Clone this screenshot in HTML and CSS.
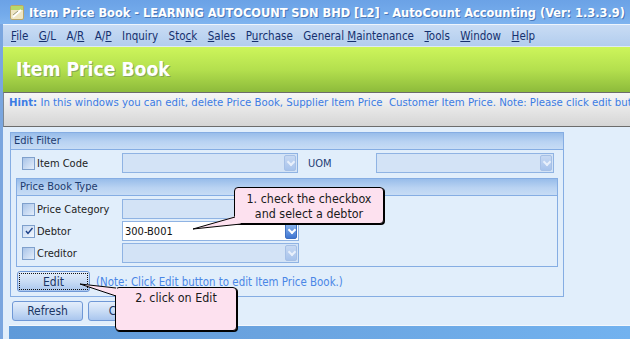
FILE: index.html
```html
<!DOCTYPE html>
<html lang="en">
<head>
  <meta charset="UTF-8" />
  <title>Item Price Book</title>
  <link rel="stylesheet" href="styles.css">
</head>
<body>
  <div class="window">
    <div class="titlebar">
      <svg class="app-icon" width="14" height="15" viewBox="0 0 14 15">
        <rect x="0.5" y="0.5" width="13" height="14" rx="1.5" fill="#efe6c4" stroke="#b9a66a"/>
        <rect x="1" y="1" width="12" height="4" fill="#b8d86a"/>
        <path d="M3 12 L11 5" stroke="#ffffff" stroke-width="2"/>
        <path d="M3 10 L8 6" stroke="#9a9a7a" stroke-width="1"/>
      </svg>
      <span class="title">Item Price Book - LEARNNG AUTOCOUNT SDN BHD [L2] - AutoCount Accounting (Ver: 1.3.3.9)</span>
    </div>

    <div class="frame">
      <ul class="menubar">
        <li><u>F</u>ile</li>
        <li><u>G</u>/L</li>
        <li>A/<u>R</u></li>
        <li>A/<u>P</u></li>
        <li>Inquiry</li>
        <li>Sto<u>c</u>k</li>
        <li><u>S</u>ales</li>
        <li>P<u>u</u>rchase</li>
        <li>General <u>M</u>aintenance</li>
        <li><u>T</u>ools</li>
        <li><u>W</u>indow</li>
        <li><u>H</u>elp</li>
      </ul>

      <div class="banner">Item Price Book</div>

      <div class="hint"><b>Hint:</b> In this windows you can edit, delete Price Book, Supplier Item Price&nbsp; Customer Item Price. Note: Please click edit button to continue.</div>

      <div class="content">
        <div class="panel filter">
          <div class="panel-head">Edit Filter</div>
          <div class="filter-body">
            <div class="row top-row">
              <label class="check"><span class="box"></span>Item Code</label>
              <div class="combo wide"><span class="drop"></span></div>
              <span class="field-label">UOM</span>
              <div class="combo uom"><span class="drop"></span></div>
            </div>

            <div class="panel type">
              <div class="panel-head">Price Book Type</div>
              <div class="type-body">
                <div class="row">
                  <label class="check"><span class="box"></span>Price Category</label>
                  <div class="combo"><span class="drop"></span></div>
                </div>
                <div class="row">
                  <label class="check"><span class="box checked">
                    <svg width="10" height="10" viewBox="0 0 10 10"><path d="M2 5 L4 7.5 L8.5 2" fill="none" stroke="#1b3f86" stroke-width="1.4"/></svg>
                  </span>Debtor</label>
                  <div class="combo active"><span class="value">300-B001</span><span class="drop"></span></div>
                </div>
                <div class="row">
                  <label class="check"><span class="box"></span>Creditor</label>
                  <div class="combo"><span class="drop"></span></div>
                </div>
              </div>
            </div>

            <div class="edit-row">
              <button class="btn focused"><span>Edit</span></button>
              <span class="note">(Note: Click Edit button to edit Item Price Book.)</span>
            </div>
          </div>
        </div>

        <div class="actions">
          <button class="btn">Refresh</button>
          <button class="btn">Close</button>
        </div>
      </div>

      <div class="statusbar"></div>
    </div>

    <!-- tutorial callouts -->
    <div class="callout callout-one">1. check the checkbox<br>and select a debtor</div>
    <div class="callout callout-two">2. click on Edit</div>
    <svg class="tails" width="630" height="339" viewBox="0 0 630 339">
      <polygon points="236,216 193,229 241,224" fill="#fde1ef"/>
      <polyline points="235,217 193,229 241,224" fill="none" stroke="#000" stroke-width="1"/>
      <polygon points="117,288 80,284 117,296" fill="#fde1ef"/>
      <polyline points="116,288 80,284 116,296" fill="none" stroke="#000" stroke-width="1"/>
    </svg>
  </div>
</body>
</html>
```

FILE: styles.css
```css
body {
  margin: 0;
  font-family: "DejaVu Sans Condensed", "DejaVu Sans", sans-serif;
  font-stretch: condensed;
  font-size: 11px;
  background: #e1eefb;
  overflow: hidden;
}

.window {
  position: relative;
  width: 630px;
  height: 339px;
  overflow: hidden;
}

/* Title bar */
.titlebar {
  height: 24px;
  display: flex;
  align-items: center;
  gap: 5px;
  padding-left: 10px;
  background: linear-gradient(to bottom, #6ba2e6, #74abeb 60%, #7fb4ef);
  color: #fff;
}
.title {
  font-weight: bold;
  font-size: 12.65px;
  white-space: nowrap;
  text-shadow: 1px 1px 0 #4a78b8;
}

.frame {
  border-left: 3px solid #7aa6df;
  height: 315px;
  display: flex;
  flex-direction: column;
}

/* Menu */
.menubar {
  list-style: none;
  margin: 0;
  height: 21px;
  padding: 0 0 0 8px;
  display: flex;
  align-items: center;
  gap: 10.5px;
  border-top: 1px solid #eef5fd;
  background: linear-gradient(to bottom, #c9dcf4, #b2cdee);
  color: #15306e;
  font-size: 11.5px;
  white-space: nowrap;
}

/* Green banner */
.banner {
  height: 46px;
  box-sizing: border-box;
  padding-left: 13px;
  display: flex;
  align-items: center;
  border-top: 1px solid #dfe9f5;
  background: linear-gradient(to bottom, #cdf55b, #b4e04e 50%, #8dbb3b);
  color: #fff;
  font-size: 19.2px;
  font-weight: bold;
  text-shadow: 1px 1px 0 #86a85a;
}

/* Hint */
.hint {
  height: 35px;
  box-sizing: border-box;
  padding: 3px 0 0 5px;
  border-top: 1px solid #6c6c6c;
  border-bottom: 1px solid #6c6c6c;
  border-left: 1px solid #7b8794;
  background: linear-gradient(to bottom, #f6f6f6, #e6e6e6 50%, #d5d5d5);
  color: #3c7ce4;
  font-size: 11.3px;
  white-space: nowrap;
  overflow: hidden;
}

.content {
  flex: 1;
  padding: 5px 0 0 7px;
  background: #e1eefb;
}

/* Panels */
.panel {
  border: 1px solid #85ade3;
}
.panel-head {
  height: 17px;
  box-sizing: border-box;
  padding: 1px 0 0 3px;
  border-bottom: 1px solid #85ade3;
  background: linear-gradient(to bottom, #98bdea, #b9d3f2 55%, #c7dcf5);
  color: #1c3b6e;
}
.filter {
  width: 552px;
}
.filter-body {
  padding: 3px 5px 4px 5px;
}
.top-row {
  padding-left: 6px;
}
.type {
  margin-top: 5px;
}
.type-body {
  padding: 3px 0 3px 5px;
  display: flex;
  flex-direction: column;
  gap: 2px;
}

.row {
  display: flex;
  align-items: center;
  height: 20px;
}
.check {
  width: 100px;
  display: flex;
  align-items: center;
  gap: 2px;
  color: #222;
}
.box {
  width: 11px;
  height: 11px;
  border: 1px solid #7fa0cc;
  background: linear-gradient(135deg, #a9c4e8, #e4eefb);
  display: flex;
  align-items: center;
  justify-content: center;
}
.box.checked {
  background: linear-gradient(135deg, #c6d9f2, #f2f7fd);
}

.combo {
  position: relative;
  width: 177px;
  height: 20px;
  box-sizing: border-box;
  border: 1px solid #8fb3e3;
  background: #d3e3f6;
}
.combo.wide {
  width: 176px;
}
.combo.uom {
  width: 178px;
}
.combo.active {
  background: #fff;
}
.value {
  display: block;
  padding: 3px 0 0 2px;
  color: #111;
}
.drop {
  position: absolute;
  right: 1px;
  top: 1px;
  width: 12px;
  height: 16px;
  border-radius: 2px;
  border: 1px solid #a6c0e6;
  box-sizing: border-box;
  background: linear-gradient(to bottom, #c7d9f3, #a7c3ec);
}
.drop::after {
  content: "";
  position: absolute;
  left: 3px;
  top: 3px;
  width: 4px;
  height: 4px;
  border-right: 2px solid #e8f0fb;
  border-bottom: 2px solid #e8f0fb;
  transform: rotate(45deg);
}
.active .drop {
  border-color: #3f6fc0;
  background: linear-gradient(to bottom, #8eb6ee, #3f76d2);
}
.active .drop::after {
  border-color: #fff;
}
.field-label {
  width: 68px;
  padding-left: 10px;
  color: #1d3b74;
}

/* Buttons */
.btn {
  height: 21px;
  box-sizing: border-box;
  border: 1px solid #6f98d6;
  border-radius: 3px;
  background: linear-gradient(to bottom, #e4eefb, #c9dcf5 50%, #a9c6ee);
  color: #1b3563;
  font-family: inherit;
  font-stretch: condensed;
  font-size: 12px;
  padding: 0;
}
.edit-row {
  display: flex;
  align-items: center;
  gap: 6px;
  margin-top: 4px;
  padding-left: 1px;
}
.edit-row .btn {
  width: 73px;
  padding: 1px;
}
.focused span {
  display: block;
  height: 100%;
  border: 1px dotted #111;
  box-sizing: border-box;
  line-height: 16px;
}
.note {
  color: #4a86e6;
  font-size: 11.4px;
}
.actions {
  display: flex;
  gap: 5px;
  margin-top: 4px;
  padding-left: 2px;
}
.actions .btn {
  width: 71px;
  height: 20px;
}

.statusbar {
  height: 13px;
  margin-left: 6px;
  border-top: 1px solid #f3f7fc;
  background: linear-gradient(to right, #5f9ad9, #6aa3df 40%, #72b2ef);
}

/* Callouts */
.callout {
  position: absolute;
  box-sizing: border-box;
  border: 1px solid #000;
  border-radius: 4px;
  box-shadow: 1px 1px 0 #000;
  background: #fde1ef;
  color: #1a1a1a;
  font-size: 12.4px;
  text-align: center;
  line-height: 15px;
}
.callout-one {
  left: 234px;
  top: 187px;
  width: 150px;
  height: 37px;
  padding-top: 3px;
}
.callout-two {
  left: 115px;
  top: 287px;
  width: 122px;
  height: 44px;
  padding-top: 2px;
}
.tails {
  position: absolute;
  left: 0;
  top: 0;
}
```
